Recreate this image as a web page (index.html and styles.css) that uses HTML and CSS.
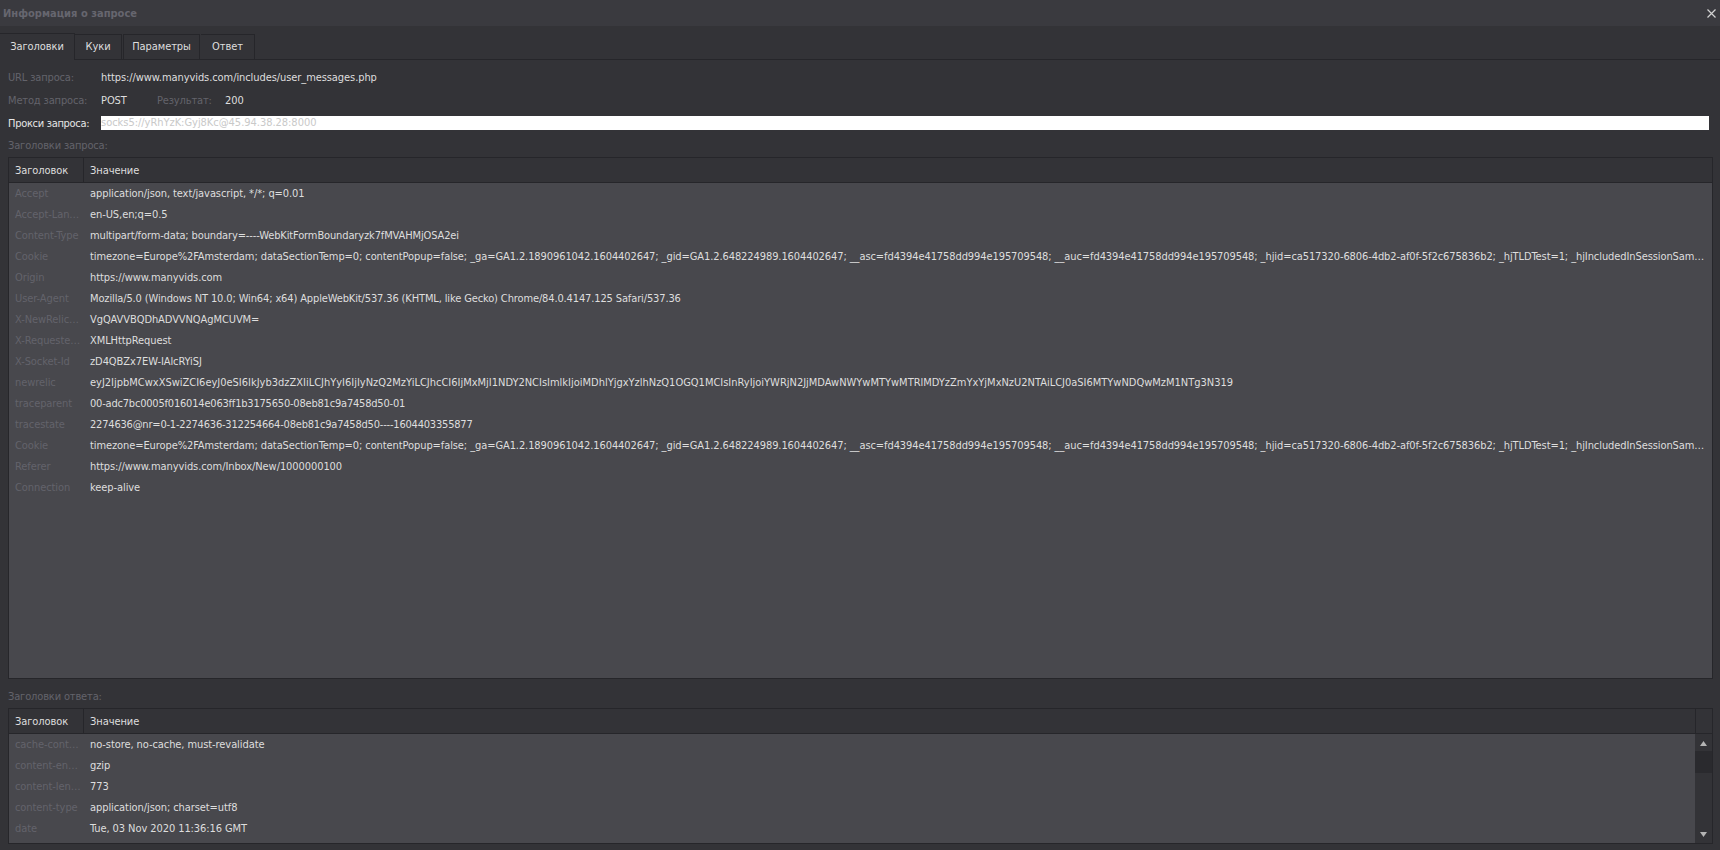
FILE: index.html
```html
<!DOCTYPE html>
<html lang="ru">
<head>
<meta charset="utf-8">
<title>Информация о запросе</title>
<link rel="stylesheet" href="styles.css">
</head>
<body>
<div class="window">
  <header class="titlebar">
    <span class="title">Информация о запросе</span>
    <svg class="close" width="9" height="9" viewBox="0 0 9 9"><path d="M.5.5l8 8M8.5.5l-8 8" stroke="#d2d2d2" stroke-width="1.2" fill="none"/></svg>
  </header>
  <nav class="tabs">
    <span class="tab tab-active">Заголовки</span>
    <span class="tab tab-kuki">Куки</span>
    <span class="tab tab-params">Параметры</span>
    <span class="tab tab-answer">Ответ</span>
  </nav>
  <main class="page">
    <div class="field">
      <span class="label">URL запроса:</span>
      <span class="value">https://www.manyvids.com/includes/user_messages.php</span>
    </div>
    <div class="field">
      <span class="label">Метод запроса:</span>
      <span class="value method">POST</span>
      <span class="label result-label">Результат:</span>
      <span class="value">200</span>
    </div>
    <div class="field">
      <span class="label label-on">Прокси запроса:</span>
      <div class="input">socks5://yRhYzK:Gyj8Kc@45.94.38.28:8000</div>
    </div>
    <div class="section-label">Заголовки запроса:</div>
    <section class="grid grid-main">
      <div class="grid-head"><span class="h-key">Заголовок</span><span class="h-val">Значение</span></div>
      <div class="grid-body">
        <div class="rows">
          <div class="row"><span class="key">Accept</span><span class="val">application/json, text/javascript, */*; q=0.01</span></div>
          <div class="row"><span class="key">Accept-Language</span><span class="val">en-US,en;q=0.5</span></div>
          <div class="row"><span class="key">Content-Type</span><span class="val val-mid">multipart/form-data; boundary=----WebKitFormBoundaryzk7fMVAHMjOSA2ei</span></div>
          <div class="row"><span class="key">Cookie</span><span class="val val-cookie">timezone=Europe%2FAmsterdam; dataSectionTemp=0; contentPopup=false; _ga=GA1.2.1890961042.1604402647; _gid=GA1.2.648224989.1604402647; __asc=fd4394e41758dd994e195709548; __auc=fd4394e41758dd994e195709548; _hjid=ca517320-6806-4db2-af0f-5f2c675836b2; _hjTLDTest=1; _hjIncludedInSessionSample=0; _hjAbsoluteSessionInProgress=0</span></div>
          <div class="row"><span class="key">Origin</span><span class="val">https://www.manyvids.com</span></div>
          <div class="row"><span class="key">User-Agent</span><span class="val val-mid">Mozilla/5.0 (Windows NT 10.0; Win64; x64) AppleWebKit/537.36 (KHTML, like Gecko) Chrome/84.0.4147.125 Safari/537.36</span></div>
          <div class="row"><span class="key">X-NewRelic-ID</span><span class="val">VgQAVVBQDhADVVNQAgMCUVM=</span></div>
          <div class="row"><span class="key">X-Requested-With</span><span class="val">XMLHttpRequest</span></div>
          <div class="row"><span class="key">X-Socket-Id</span><span class="val">zD4QBZx7EW-IAlcRYiSJ</span></div>
          <div class="row"><span class="key">newrelic</span><span class="val val-b64">eyJ2IjpbMCwxXSwiZCI6eyJ0eSI6IkJyb3dzZXIiLCJhYyI6IjIyNzQ2MzYiLCJhcCI6IjMxMjI1NDY2NCIsImlkIjoiMDhlYjgxYzlhNzQ1OGQ1MCIsInRyIjoiYWRjN2JjMDAwNWYwMTYwMTRlMDYzZmYxYjMxNzU2NTAiLCJ0aSI6MTYwNDQwMzM1NTg3N319</span></div>
          <div class="row"><span class="key">traceparent</span><span class="val val-tight">00-adc7bc0005f016014e063ff1b3175650-08eb81c9a7458d50-01</span></div>
          <div class="row"><span class="key">tracestate</span><span class="val val-tight">2274636@nr=0-1-2274636-312254664-08eb81c9a7458d50----1604403355877</span></div>
          <div class="row"><span class="key">Cookie</span><span class="val val-cookie">timezone=Europe%2FAmsterdam; dataSectionTemp=0; contentPopup=false; _ga=GA1.2.1890961042.1604402647; _gid=GA1.2.648224989.1604402647; __asc=fd4394e41758dd994e195709548; __auc=fd4394e41758dd994e195709548; _hjid=ca517320-6806-4db2-af0f-5f2c675836b2; _hjTLDTest=1; _hjIncludedInSessionSample=0; _hjAbsoluteSessionInProgress=0</span></div>
          <div class="row"><span class="key">Referer</span><span class="val">https://www.manyvids.com/Inbox/New/1000000100</span></div>
          <div class="row"><span class="key">Connection</span><span class="val">keep-alive</span></div>
        </div>
      </div>
    </section>
    <div class="section-label section-label-2">Заголовки ответа:</div>
    <section class="grid grid-resp">
      <div class="grid-head"><span class="h-key">Заголовок</span><span class="h-val">Значение</span><span class="h-corner"></span></div>
      <div class="grid-body">
        <div class="rows">
          <div class="row"><span class="key">cache-control</span><span class="val">no-store, no-cache, must-revalidate</span></div>
          <div class="row"><span class="key">content-encoding</span><span class="val">gzip</span></div>
          <div class="row"><span class="key">content-length</span><span class="val">773</span></div>
          <div class="row"><span class="key">content-type</span><span class="val">application/json; charset=utf8</span></div>
          <div class="row"><span class="key">date</span><span class="val">Tue, 03 Nov 2020 11:36:16 GMT</span></div>
        </div>
        <div class="scrollbar">
          <svg class="arrow" width="7" height="5" viewBox="0 0 7 5"><path d="M3.5 0L7 5H0z" fill="#b4b4b4"/></svg>
          <div class="thumb"></div>
          <svg class="arrow arrow-down" width="7" height="5" viewBox="0 0 7 5"><path d="M0 0h7L3.5 5z" fill="#b4b4b4"/></svg>
        </div>
      </div>
    </section>
  </main>
</div>
</body>
</html>
```

FILE: styles.css
```css
* { box-sizing: border-box; }
html, body { margin: 0; height: 100%; }
body {
  background: #333337;
  color: #dedede;
  font-family: "DejaVu Sans", sans-serif;
  font-stretch: condensed;
  font-size: 11px;
  letter-spacing: -0.08px;
  overflow: hidden;
}
.window { height: 850px; display: flex; flex-direction: column; }
.titlebar {
  height: 26px;
  flex: none;
  background: #3a3a3f;
  display: flex;
  align-items: center;
  justify-content: space-between;
  padding: 0 4px 0 3px;
}
.title { font-weight: 700; color: #66666f; letter-spacing: 0.02px; }
.tabs {
  height: 34px;
  flex: none;
  padding-top: 7px;
  display: flex;
  align-items: flex-start;
  border-bottom: 1px solid #26262a;
}
.tab {
  height: 26px;
  margin-top: 1px;
  line-height: 24px;
  text-align: center;
  border: 1px solid #26262a;
  border-left: 0;
  background: #333337;
}
.tab-active { width: 75px; height: 27px; margin-top: 0; line-height: 26px; border-bottom: 0; position: relative; z-index: 1; }
.tab-kuki { width: 47px; }
.tab-params { width: 77px; margin-left: 1px; border-left: 1px solid #26262a; }
.tab-answer { width: 54px; margin-left: 1px; }
.page {
  flex: 1;
  min-height: 0;
  display: flex;
  flex-direction: column;
  padding: 6px 7px 6px 8px;
}
.field { height: 23px; flex: none; display: flex; align-items: center; }
.label { color: #63636b; width: 93px; flex: none; letter-spacing: -0.15px; }
.label-on { color: #e6e6e6; letter-spacing: -0.3px; }
.method { width: 56px; flex: none; }
.result-label { width: 68px; }
.input {
  flex: 1;
  height: 14px;
  margin-right: 4px;
  align-self: flex-start;
  margin-top: 4px;
  background: #fff;
  color: #c9c9c9;
  line-height: 14px;
  letter-spacing: -0.03px;
}
.section-label { height: 22px; flex: none; line-height: 22px; color: #63636b; letter-spacing: -0.15px; }
.section-label-2 { height: 29px; line-height: 35px; }
.grid { border: 1px solid #26262a; display: flex; flex-direction: column; flex: none; }
.grid-main { height: 522px; }
.grid-resp { height: 136px; }
.grid-head { height: 25px; flex: none; display: flex; align-items: center; border-bottom: 1px solid #26262a; line-height: 25px; }
.h-key { width: 75px; height: 24px; padding-left: 6px; border-right: 1px solid #26262a; flex: none; }
.h-val { flex: 1; height: 24px; padding-left: 6px; }
.h-corner { width: 17px; height: 24px; border-left: 1px solid #26262a; flex: none; }
.grid-body { flex: 1; min-height: 0; background: #48484d; display: flex; }
.rows { flex: 1; min-width: 0; }
.row { height: 21px; display: flex; align-items: center; }
.key { width: 75px; flex: none; padding: 0 3px 0 6px; color: #63636b; white-space: nowrap; overflow: hidden; text-overflow: ellipsis; }
.val { flex: 1; min-width: 0; padding: 0 6px; white-space: nowrap; overflow: hidden; text-overflow: ellipsis; }
.val-cookie { letter-spacing: -0.09px; padding-right: 2px; }
.val-b64 { letter-spacing: -0.01px; }
.val-mid { letter-spacing: -0.13px; }
.val-tight { letter-spacing: -0.2px; }
.scrollbar { width: 17px; flex: none; background: #333337; display: flex; flex-direction: column; align-items: center; padding: 7px 0 6px; position: relative; }
.arrow { flex: none; }
.arrow-down { margin-top: auto; }
.thumb { position: absolute; top: 17px; left: 0; width: 17px; height: 22px; background: #2a2a2e; }
```
